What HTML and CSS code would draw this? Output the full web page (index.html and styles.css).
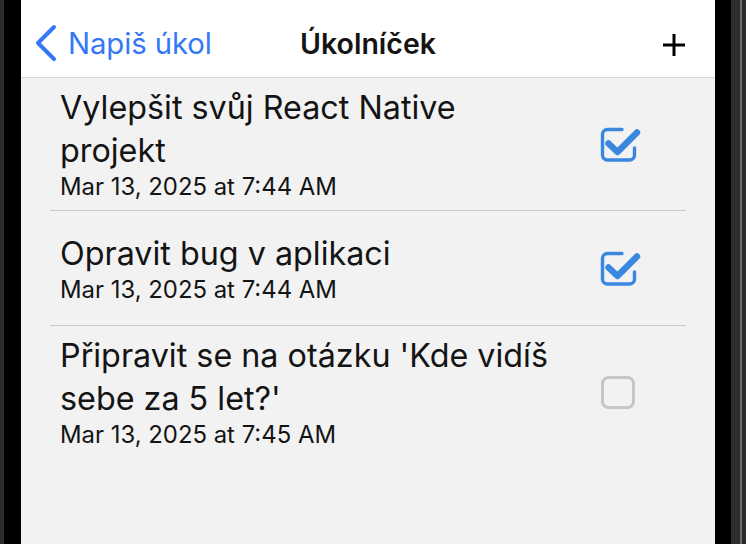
FILE: index.html
```html
<!DOCTYPE html>
<html lang="cs">
<head>
<meta charset="utf-8">
<title>Úkolníček</title>
<link rel="stylesheet" href="styles.css">
</head>
<body>
<div class="device">
  <div class="edge edge-left"></div>
  <div class="bezel"></div>
  <div class="screen">
    <header class="navbar">
      <a class="nav-back" href="#">
        <svg class="chevron" width="24" height="38" viewBox="0 0 24 38"><path d="M20 3 L4 19 L20 35" fill="none" stroke="currentColor" stroke-width="4" stroke-linecap="round" stroke-linejoin="round"/></svg>
        <span>Napiš úkol</span>
      </a>
      <h1 class="nav-title">Úkolníček</h1>
      <button class="nav-add" aria-label="Přidat">
        <svg width="24" height="24" viewBox="0 0 24 24"><path d="M12 1 V23 M1 12 H23" stroke="currentColor" stroke-width="3" fill="none"/></svg>
      </button>
    </header>
    <ul class="task-list">
      <li class="task">
        <div class="task-text">
          <div class="task-title">Vylepšit svůj React Native projekt</div>
          <div class="task-date">Mar 13, 2025 at 7:44 AM</div>
        </div>
        <div class="task-check">
          <svg class="check on" width="42" height="40" viewBox="0 0 42 40"><path d="M23 5.5 H8.5 a5 5 0 0 0 -5 5 V31 a5 5 0 0 0 5 5 H30.5 a5 5 0 0 0 5 -5 V24" fill="none" stroke="currentColor" stroke-width="3.4" stroke-linecap="round"/><path d="M9.5 19.5 L18.5 28 L38 8.5" fill="none" stroke="currentColor" stroke-width="6.5" stroke-linecap="round" stroke-linejoin="round"/></svg>
        </div>
      </li>
      <li class="task">
        <div class="task-text">
          <div class="task-title">Opravit bug v aplikaci</div>
          <div class="task-date">Mar 13, 2025 at 7:44 AM</div>
        </div>
        <div class="task-check">
          <svg class="check on" width="42" height="40" viewBox="0 0 42 40"><path d="M23 5.5 H8.5 a5 5 0 0 0 -5 5 V31 a5 5 0 0 0 5 5 H30.5 a5 5 0 0 0 5 -5 V24" fill="none" stroke="currentColor" stroke-width="3.4" stroke-linecap="round"/><path d="M9.5 19.5 L18.5 28 L38 8.5" fill="none" stroke="currentColor" stroke-width="6.5" stroke-linecap="round" stroke-linejoin="round"/></svg>
        </div>
      </li>
      <li class="task">
        <div class="task-text">
          <div class="task-title">Připravit se na otázku 'Kde vidíš sebe za 5 let?'</div>
          <div class="task-date">Mar 13, 2025 at 7:45 AM</div>
        </div>
        <div class="task-check">
          <svg class="check off" width="42" height="40" viewBox="0 0 42 40"><rect x="3.5" y="5.5" width="31" height="30" rx="6" fill="none" stroke="currentColor" stroke-width="3"/></svg>
        </div>
      </li>
    </ul>
  </div>
  <div class="bezel bezel-right"></div>
  <div class="edge edge-right"></div>
</div>
</body>
</html>
```

FILE: styles.css
```css
* { box-sizing: border-box; }
html, body { margin: 0; padding: 0; background: #000; }
body { font-family: Inter, "Noto Sans", sans-serif; color: #141414; }

.device {
  display: flex;
  width: 746px;
  height: 544px;
  overflow: hidden;
}
.edge { height: 100%; }
.edge-left { width: 4px; background: #2c2c2c; }
.bezel { width: 17px; background: #000; }
.bezel-right { width: 16px; }
.edge-right {
  width: 15px;
  background: linear-gradient(to right, #2e2e2e 0, #2e2e2e 9px, #6c6c6c 9px, #6c6c6c 11px, #2a2a2a 11px);
}

.screen {
  width: 694px;
  flex: none;
  background: #f2f2f2;
  display: flex;
  flex-direction: column;
}

.navbar {
  height: 78px;
  background: #fff;
  border-bottom: 1px solid #d8d8d8;
  display: flex;
  align-items: center;
  padding: 10px 29px 0 13px;
  position: relative;
}
.nav-back {
  display: flex;
  align-items: center;
  gap: 10px;
  color: #3478f6;
  text-decoration: none;
  font-size: 29.3px;
  letter-spacing: -0.1px;
}
.chevron { display: block; margin-top: -1px; }
.nav-title {
  margin: 0;
  position: absolute;
  left: 0;
  right: 0;
  top: 10px;
  bottom: 0;
  display: flex;
  align-items: center;
  justify-content: center;
  font-size: 28.5px;
  font-weight: 600;
  pointer-events: none;
}
.nav-add {
  margin-left: auto;
  border: 0;
  background: none;
  padding: 0;
  color: #000;
  display: flex;
}
.nav-add svg { display: block; margin-top: 2px; }

.task-list {
  list-style: none;
  margin: 0;
  padding: 0 29px;
}
.task {
  display: flex;
  align-items: center;
  min-height: 115px;
  padding: 8px 0 8px 10px;
  border-bottom: 1.5px solid #cacaca;
}
.task:last-child { border-bottom: 0; }
.task-text { flex: 1; }
.task-title {
  font-size: 32.3px;
  line-height: 43px;
  max-width: 495px;
}
.task-date {
  font-size: 23.9px;
  line-height: 30px;
}
.task-check {
  width: 42px;
  margin-right: 45px;
  display: flex;
}
.check { display: block; }
.check.on { color: #3a87e0; }
.check.off { color: #c6c6c6; }
```
